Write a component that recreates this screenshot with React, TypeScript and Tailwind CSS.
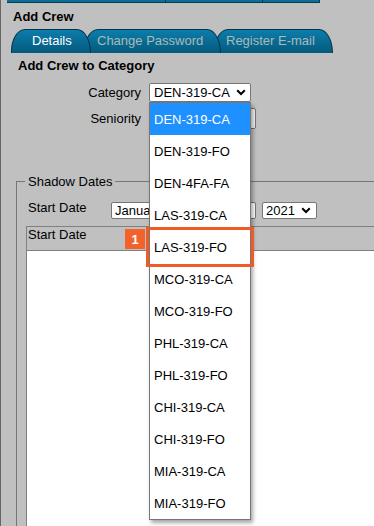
import React from 'react';

const categories = [
  'DEN-319-CA',
  'DEN-319-FO',
  'DEN-4FA-FA',
  'LAS-319-CA',
  'LAS-319-FO',
  'MCO-319-CA',
  'MCO-319-FO',
  'PHL-319-CA',
  'PHL-319-FO',
  'CHI-319-CA',
  'CHI-319-FO',
  'MIA-319-CA',
  'MIA-319-FO',
];

const Chevron: React.FC = () => (
  <svg width="10" height="7" viewBox="0 0 10 7" className="shrink-0">
    <path d="M1.2 1.3 L5 5 L8.8 1.3" fill="none" stroke="#000" strokeWidth="2" />
  </svg>
);

const App: React.FC = () => {
  return (
    <div className="relative w-[374px] h-[526px] overflow-hidden bg-[#c0c0c0] border-l border-[#666] text-[13px] leading-[15px] text-black font-['Liberation_Sans',Arial,sans-serif]">
      {/* top tab strip (cut off) */}
      <div className="ml-[6px] flex h-[3px] w-[313px]">
        <div className="w-[159px] bg-[#0a6e96] border-b border-r border-[#043a52]" />
        <div className="w-[97px] bg-[#0a6e96] border-b border-r border-[#043a52]" />
        <div className="flex-1 bg-[#0a6e96] border-b border-r border-[#043a52]" />
      </div>

      <div className="mt-[6px] pl-[12px] font-bold">Add Crew</div>

      {/* tabs */}
      <div className="mt-[5px] flex h-[24px] pl-[10px]">
        <div className="relative z-30 flex w-[80px] items-start pl-[20px] pt-[3px] rounded-tl-[14px_22px] rounded-tr-[14px_24px] border-x border-t border-[#05344a] bg-gradient-to-b from-[#0c7dab] to-[#055a7e] text-white">
          Details
        </div>
        <div className="relative z-20 -ml-[7px] flex w-[137px] items-start pl-[12px] pt-[3px] rounded-tl-[14px_22px] rounded-tr-[14px_24px] border-x border-t border-[#05344a] bg-gradient-to-b from-[#0c7dab] to-[#055a7e] text-[#a9bbb6]">
          Change Password
        </div>
        <div className="relative z-10 -ml-[7px] flex w-[119px] items-start pl-[11px] pt-[3px] rounded-tl-[14px_22px] rounded-tr-[14px_24px] border-x border-t border-[#05344a] bg-gradient-to-b from-[#0c7dab] to-[#055a7e] text-[#a9bbb6]">
          Register E-mail
        </div>
      </div>

      <div className="mt-[5px] pl-[17px] font-bold">Add Crew to Category</div>

      {/* form rows */}
      <div className="mt-[10px] flex items-start">
        <div className="w-[140px] pt-[2px] text-right">Category</div>
        <div className="ml-[8px] flex h-[19px] w-[102px] items-center justify-between rounded-[2px] border border-[#767676] bg-white pl-[4px] pr-[4px]">
          <span>DEN-319-CA</span>
          <Chevron />
        </div>
      </div>
      <div className="mt-[6px] flex items-center">
        <div className="w-[140px] text-right">Seniority</div>
        <div className="ml-[8px] h-[21px] w-[107px] rounded-[2px] border border-[#767676] bg-[#f3f3f3]" />
      </div>

      {/* shadow dates */}
      <fieldset className="mt-[45px] ml-[15px] w-[420px] border-l border-t border-[#767676] pl-[9px]">
        <legend className="ml-[-1px] pl-[3px] pr-[2px]">Shadow Dates</legend>
        <div className="mt-[13px] flex items-start">
          <div className="-mt-[2px] w-[85px] pl-[2px]">Start Date</div>
          <div className="flex h-[17px] w-[145px] items-center rounded-[2px] border border-[#767676] bg-white pl-[3px]">
            January
          </div>
          <div className="ml-[6px] flex h-[17px] w-[55px] items-center justify-between rounded-[2px] border border-[#767676] bg-white pl-[3px] pr-[5px]">
            <span>2021</span>
            <Chevron />
          </div>
        </div>
        <div className="mt-[7px] border-l border-t border-[#808080]">
          <div className="h-[24px] border-b border-[#808080] bg-[#c0c0c0] pl-[1px]">Start Date</div>
          <div className="h-[300px] bg-white" />
        </div>
      </fieldset>

      {/* open dropdown list */}
      <div className="absolute left-[148px] top-[102px] w-[102px] border border-[#767676] bg-white shadow-[2px_3px_4px_rgba(0,0,0,0.35)]">
        {categories.map((c, i) => (
          <div
            key={c}
            className={`flex h-[32px] items-center pl-[4px] ${i === 0 ? 'bg-[#1e90ff] text-white' : 'text-black'}`}
          >
            {c}
          </div>
        ))}
      </div>

      {/* callout */}
      <div className="absolute left-[145px] top-[227px] h-[40px] w-[108px] border-[3px] border-[#ee5b27]" />
      <div className="absolute left-[124px] top-[229px] flex h-[20px] w-[20px] items-center justify-center bg-[#f2622a] font-bold text-white">
        1
      </div>
    </div>
  );
};

export default App;
